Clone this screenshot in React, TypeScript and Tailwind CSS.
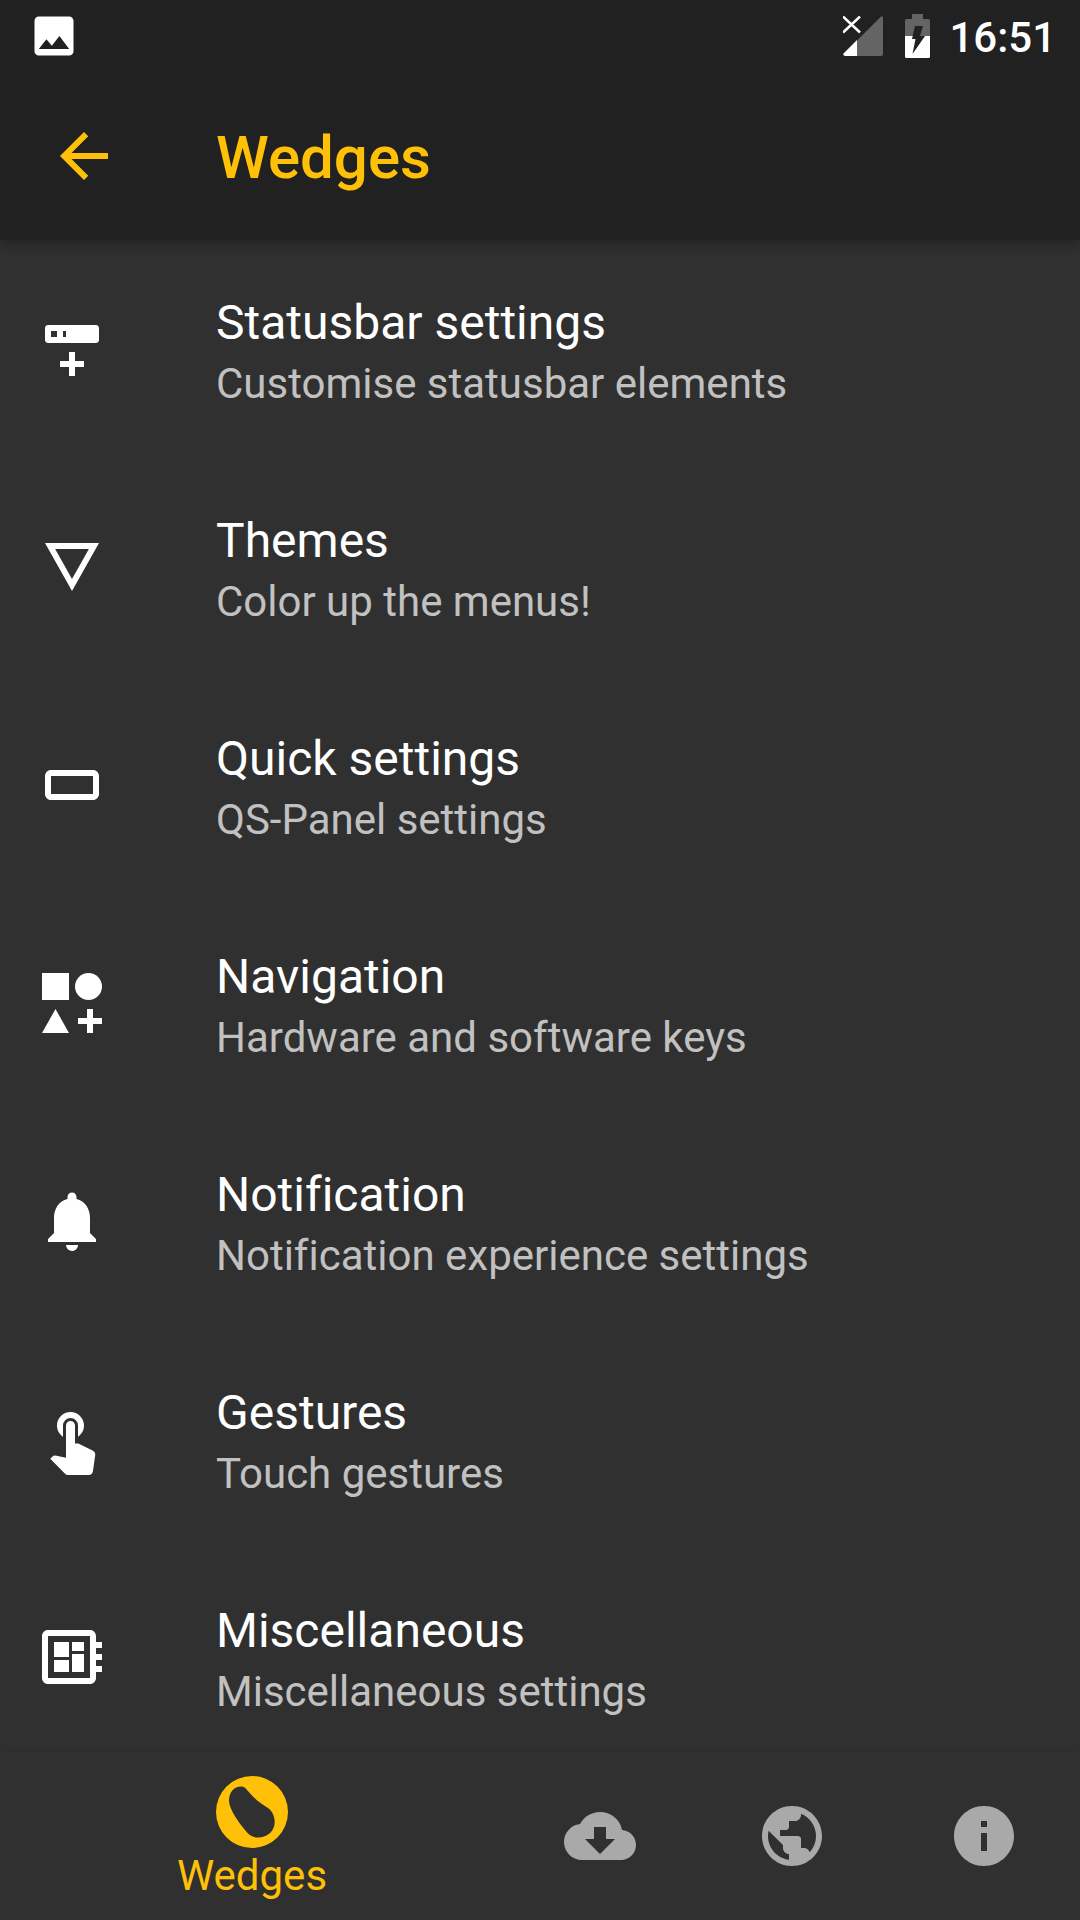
import React from "react";
import {
  MdArrowBack,
  MdCloudDownload,
  MdDeveloperBoard,
  MdImage,
  MdInfo,
  MdNotifications,
  MdPublic,
  MdTouchApp,
} from "react-icons/md";

const StatusbarIcon = () => (
  <svg viewBox="0 0 24 24" className="size-18" fill="currentColor" aria-hidden="true">
    <path
      fillRule="evenodd"
      d="M4 4h16c.55 0 1 .45 1 1v4c0 .55-.45 1-1 1H4c-.55 0-1-.45-1-1V5c0-.55.45-1 1-1zm1 2v2h2V6H5zm4 0v2h1V6H9z"
    />
    <path d="M11 13h2v3h3v2h-3v3h-2v-3H8v-2h3z" />
  </svg>
);

const ThemesIcon = () => (
  <svg viewBox="0 0 24 24" className="size-18" fill="currentColor" aria-hidden="true">
    <path fillRule="evenodd" d="M3 4l9 16 9-16H3zm3.38 2h11.25L12 16 6.38 6z" />
  </svg>
);

const QuickSettingsIcon = () => (
  <svg viewBox="0 0 24 24" className="size-18" fill="currentColor" aria-hidden="true">
    <path
      fillRule="evenodd"
      d="M19 7H5c-1.1 0-2 .9-2 2v6c0 1.1.9 2 2 2h14c1.100 0 2-.9 2-2V9c0-1.100-.9-2-2-2zm0 8H5V9h14v6z"
    />
  </svg>
);

const NavigationIcon = () => (
  <svg viewBox="0 0 24 24" className="size-18" fill="currentColor" aria-hidden="true">
    <path d="M2 2h9v9H2zM6.5 14l4.5 8H2zM17 14h2v3h3v2h-3v3h-2v-3h-3v-2h3z" />
    <circle cx="17.5" cy="6.5" r="4.5" />
  </svg>
);

const PotatoIcon = () => (
  <svg viewBox="0 0 72 72" className="size-18" fill="currentColor" aria-hidden="true">
    <path
      fillRule="evenodd"
      d="M36 0a36 36 0 1 1 0 72a36 36 0 1 1 0-72zM25 10.5C18 10.5 13 16 13 25C13.5 34 23 47 29 54C32.5 58.5 36 61.5 42 61.5C52 61.5 58.7 54.5 58.7 46C58.7 41 56.5 35 52 32C43.5 27 38 22 31 14C29.5 12 28 10.5 25 10.5z"
    />
  </svg>
);

const SignalIcon = () => (
  <svg viewBox="0 0 42 42" className="size-[42px]" aria-hidden="true">
    <path d="M37.5 1Q40 -1 40 2V38Q40 40 38 40H14V24.5z" fill="#646464" />
    <path d="M14 24V40H2Q-1 39 1 37z" fill="#fff" />
    <path d="M0 .5l17 16M17 .5l-17 16" stroke="#fff" strokeWidth="2.5" />
  </svg>
);

const BatteryIcon = () => (
  <svg viewBox="0 0 26 44" className="h-11 w-[26px]" aria-hidden="true">
    <path d="M7 0h11v5h5q2 0 2 1.5V22H0V6.500Q0 5 2 5h5z" fill="#646464" />
    <path d="M0 22h25v20.500q0 1.500-1.500 1.500H1.500Q0 44 0 42.500z" fill="#fff" />
    <path d="M10 12h8l-3 10h5L7.500 40l3-15H7z" fill="#212121" />
  </svg>
);

const settings = [
  { title: "Statusbar settings", summary: "Customise statusbar elements", icon: <StatusbarIcon /> },
  { title: "Themes", summary: "Color up the menus!", icon: <ThemesIcon /> },
  { title: "Quick settings", summary: "QS-Panel settings", icon: <QuickSettingsIcon /> },
  { title: "Navigation", summary: "Hardware and software keys", icon: <NavigationIcon /> },
  { title: "Notification", summary: "Notification experience settings", icon: <MdNotifications className="size-18" /> },
  { title: "Gestures", summary: "Touch gestures", icon: <MdTouchApp className="size-18" /> },
  { title: "Miscellaneous", summary: "Miscellaneous settings", icon: <MdDeveloperBoard className="size-18" /> },
];

const tabs = [
  { label: "Downloads", icon: <MdCloudDownload className="size-18" /> },
  { label: "Web", icon: <MdPublic className="size-18" /> },
  { label: "Info", icon: <MdInfo className="size-18" /> },
];

const App = () => {
  return (
    <div className="flex h-screen flex-col bg-[#303030] font-[Roboto,sans-serif] text-white [font-variant-ligatures:none]">
      <header className="z-10 bg-[#212121] shadow-[0_4px_12px_rgba(0,0,0,0.3)]">
        <div className="flex h-18 items-center justify-between pr-6 pl-7">
          <MdImage className="size-13" />
          <div className="flex items-center">
            <span className="mr-5 pt-0.5">
              <SignalIcon />
            </span>
            <span className="mr-[18px]">
              <BatteryIcon />
            </span>
            <time className="pt-1 text-[42px] leading-none font-medium">16:51</time>
          </div>
        </div>
        <div className="flex h-42 items-center pl-12">
          <button type="button" aria-label="Back" className="mr-24 text-[#ffc107]">
            <MdArrowBack className="size-18" />
          </button>
          <h1 className="pt-1 text-[60px] leading-none font-medium text-[#ffc107]">Wedges</h1>
        </div>
      </header>

      <main className="min-h-0 flex-1 overflow-y-auto [scrollbar-width:none]">
        <ul>
          {settings.map((item) => (
            <li key={item.title}>
              <a href="#" className="flex h-[218px] items-center px-9">
                <span className="mr-27 shrink-0">{item.icon}</span>
                <span className="flex flex-col pt-1.5">
                  <span className="text-[48px] leading-[64px]">{item.title}</span>
                  <span className="text-[42px] leading-[58px] text-[#c1c1c1]">{item.summary}</span>
                </span>
              </a>
            </li>
          ))}
        </ul>
      </main>

      <nav className="z-10 flex h-42 bg-[#303030] shadow-[0_0_3px_rgba(0,0,0,0.08)]">
        <button type="button" className="flex flex-1 flex-col items-center pt-6 text-[#ffc107]">
          <PotatoIcon />
          <span className="text-[42px] leading-[56px]">Wedges</span>
        </button>
        {tabs.map((tab) => (
          <button
            key={tab.label}
            type="button"
            aria-label={tab.label}
            className="flex w-48 items-center justify-center text-[#a9a9a9]"
          >
            {tab.icon}
          </button>
        ))}
      </nav>
    </div>
  );
};

export default App;
